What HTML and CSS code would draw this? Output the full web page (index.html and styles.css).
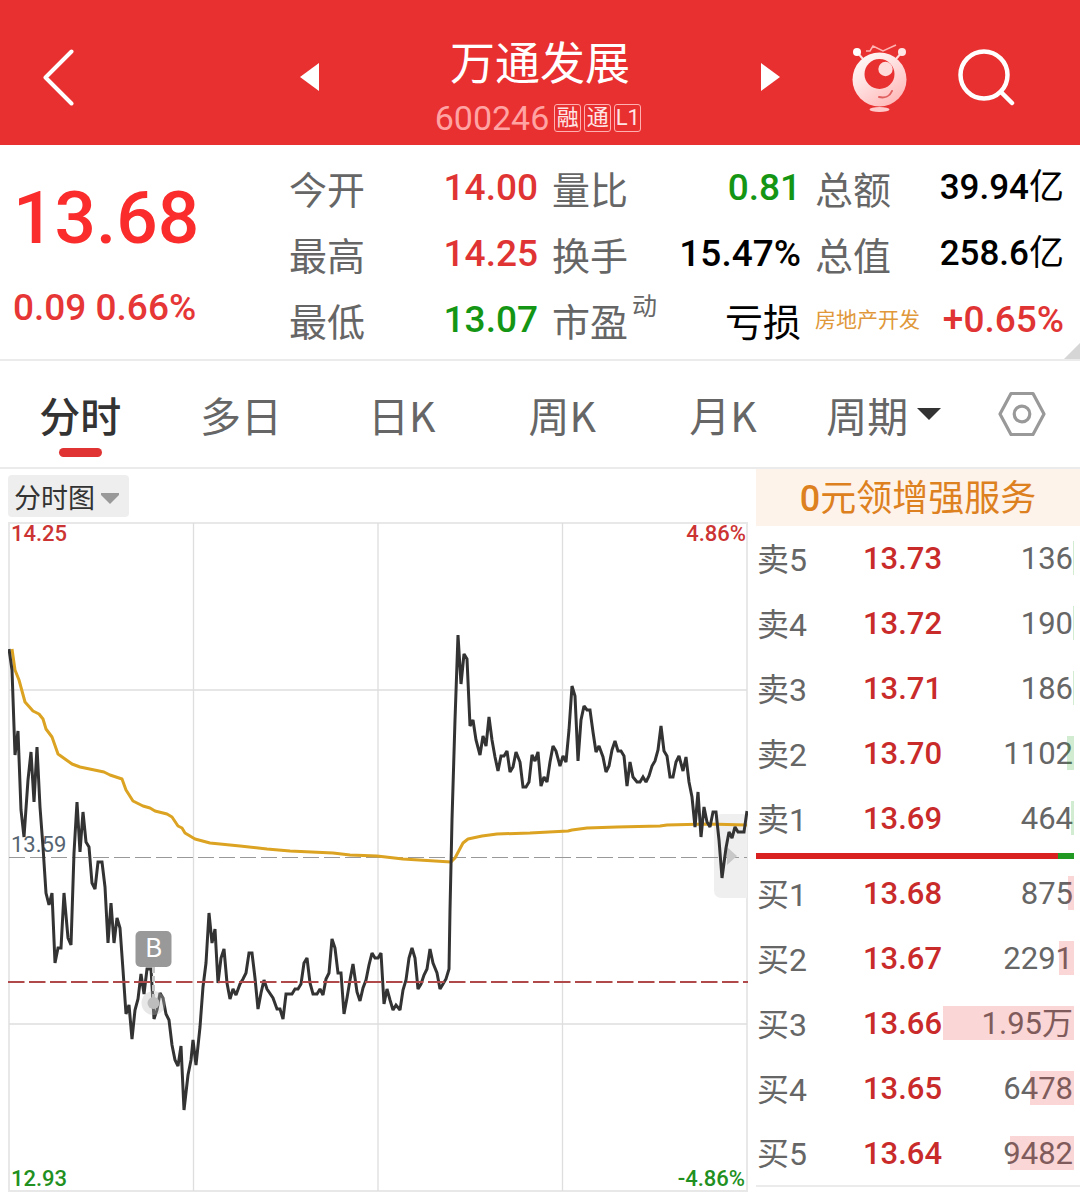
FILE: index.html
```html
<!DOCTYPE html>
<html lang="zh-CN">
<head>
<meta charset="utf-8">
<meta name="viewport" content="width=device-width">
<title>万通发展 600246</title>
<link rel="stylesheet" href="styles.css">
</head>
<body>
<header class="topbar">
  <button class="icon-btn back" aria-label="返回">
    <svg width="34" height="58" viewBox="0 0 34 58" fill="none" stroke="#fff" stroke-width="4" stroke-linecap="round" stroke-linejoin="round"><path d="M29.500 3.500 3.500 29.500 29.500 55.500"/></svg>
  </button>
  <div class="switcher">
    <button class="icon-btn" aria-label="上一只">
      <svg width="20" height="30" viewBox="0 0 20 30"><path d="M0 15 19 1v28z" fill="#fff"/></svg>
    </button>
    <div class="stock">
      <h1 class="stock-name">万通发展</h1>
      <p class="stock-code"><span class="code">600246</span><span class="badge">融</span><span class="badge">通</span><span class="badge">L1</span></p>
    </div>
    <button class="icon-btn" aria-label="下一只">
      <svg width="20" height="30" viewBox="0 0 20 30"><path d="M20 15 1 1v28z" fill="#fff"/></svg>
    </button>
  </div>
  <div class="tools">
    <button class="icon-btn" aria-label="智能助手">
      <svg width="56" height="70" viewBox="0 0 56 70">
        <defs><linearGradient id="body" x1="0" y1="0" x2=".7" y2="1"><stop offset="0" stop-color="#fff"/><stop offset=".45" stop-color="#ffe3e3"/><stop offset="1" stop-color="#ffb9b9"/></linearGradient></defs>
        <path d="M5 10l6 7M50 10l-6 7" stroke="#ffdcdc" stroke-width="2"/>
        <circle cx="5" cy="10" r="4" fill="#fff"/><circle cx="50" cy="10" r="4" fill="#ffe6e6"/>
        <path d="M14 9h4l3-5 10 5 13-6" fill="none" stroke="#ffb3b3" stroke-width="1.500"/>
        <circle cx="27.500" cy="37.500" r="27" fill="url(#body)"/>
        <circle cx="27.500" cy="32" r="15" fill="#e83030"/>
        <circle cx="33.500" cy="27" r="7.200" fill="#ffdada"/>
        <path d="M27 55c6 1.500 11-1 13-6" fill="none" stroke="#e06060" stroke-width="2" stroke-linecap="round"/>
        <ellipse cx="27.500" cy="67.500" rx="10" ry="2.500" fill="#ffc9c9"/>
      </svg>
    </button>
    <button class="icon-btn" aria-label="搜索">
      <svg width="58" height="58" viewBox="0 0 58 58" fill="none" stroke="#fff" stroke-width="4.500" stroke-linecap="round"><circle cx="26" cy="27" r="23.500"/><path d="M43.500 44.500 54 55"/></svg>
    </button>
  </div>
</header>

<section class="quote" aria-label="行情">
  <div class="last">
    <strong class="last-price">13.68</strong>
    <span class="last-change">0.09 0.66%</span>
  </div>
  <dl class="stats">
    <div class="stat"><dt>今开</dt><dd class="up">14.00</dd></div>
    <div class="stat"><dt>最高</dt><dd class="up">14.25</dd></div>
    <div class="stat"><dt>最低</dt><dd class="down">13.07</dd></div>
  </dl>
  <dl class="stats">
    <div class="stat"><dt>量比</dt><dd class="down">0.81</dd></div>
    <div class="stat"><dt>换手</dt><dd>15.47%</dd></div>
    <div class="stat"><dt>市盈<sup class="mark">动</sup></dt><dd class="word">亏损</dd></div>
  </dl>
  <dl class="stats">
    <div class="stat"><dt>总额</dt><dd class="amount">39.94<span class="unit">亿</span></dd></div>
    <div class="stat"><dt>总值</dt><dd class="amount">258.6<span class="unit">亿</span></dd></div>
    <div class="stat"><dt class="sector">房地产开发</dt><dd class="up">+0.65%</dd></div>
  </dl>
  <svg class="corner" width="16" height="16" viewBox="0 0 16 16" aria-hidden="true"><path d="M16 0v16H0z" fill="#d6d6d6"/></svg>
</section>

<nav class="tabs" aria-label="周期">
  <button class="tab active">分时</button>
  <button class="tab">多日</button>
  <button class="tab">日K</button>
  <button class="tab">周K</button>
  <button class="tab">月K</button>
  <button class="tab">周期<svg width="24" height="12" viewBox="0 0 24 12"><path d="M0 0h24L12 12z" fill="#333"/></svg></button>
  <button class="tab" aria-label="设置">
    <svg width="48" height="46" viewBox="0 0 48 46" fill="none" stroke="#999" stroke-width="3.200" stroke-linejoin="round"><path d="M13 2.500h22L46 23 35 43.500H13L2 23z"/><circle cx="24" cy="23" r="7.800"/></svg>
  </button>
</nav>

<main class="board">
  <section class="chart" aria-label="分时图">
    <div class="picker">
      <select class="picker-select" aria-label="图表类型"><option>分时图</option></select>
      <svg class="picker-arrow" width="18" height="11" viewBox="0 0 18 11"><path d="M0 0h18v2L9 11 0 2z" fill="#999"/></svg>
    </div>
    <svg class="plot" viewBox="8 522 740 672">
      <g fill="none" stroke="#e8e8e8" stroke-width="2">
        <path d="M9 523H747V1191H9z"/>
        <path d="M9 690H747M9 1024H747M193.500 523V1191M378 523V1191M562.500 523V1191" stroke="#dedede" stroke-width="1.300"/>
      </g>
      <path d="M747 814h-25q-8 0-8 8v68q0 8 8 8h25z" fill="#efefef"/>
      <path d="M9 857.500H747" stroke="#999" stroke-width="1" stroke-dasharray="16 5"/>
      <path d="M727 847v18l10-9z" fill="#c8c8c8"/>
      <text x="11" y="852" class="label base" fill="#566471">13.59</text>
      <polyline fill="none" stroke="#dba321" stroke-width="3" stroke-linejoin="round" points="12,649 15,670 19,680 25,702 33,711 39,714 43,719 46,729 52,737 58,754 65,759 72,764 80,767 104,772 110,775 122,779 126,790 133,801 143,806 150,808 155,811 167,814 172,817 178,826 182,828 185,833 195,839 210,843 240,846 267,849 290,851 333,853 350,855 377,856 403,859 451,862 455,858 463,843 468,839 482,836 497,834 530,833 568,831 572,830 587,828 617,827 660,826 667,825 707,824 747,825"/>
      <polyline fill="none" stroke="#333" stroke-width="3" stroke-linejoin="miter" stroke-miterlimit="2" points="9,649 12,670 15,755 18,731 21,810 24,837 28,780 31,752 34,802 37,747 40,807 43,847 46,893 49,905 52,893 55,963 58,948 61,948 64,893 68,938 71,945 74,853 77,802 80,852 83,812 86,842 89,847 92,883 95,889 98,862 102,862 105,887 108,943 111,903 114,943 117,918 120,928 123,970 126,1014 129,1005 132,1039 135,1010 138,999 141,974 144,994 147,969 151,969 154,1019 157,1010 160,993 163,998 166,1014 169,1020 172,1045 175,1060 178,1066 181,1046 184,1110 188,1075 191,1060 193,1040 196,1065 200,1027 203,987 206,963 209,913 212,943 215,929 218,983 221,958 224,949 227,983 230,999 233,989 236,995 240,984 243,979 246,973 249,953 252,953 255,978 258,1009 261,993 264,980 267,989 273,998 277,1009 280,1009 283,1019 286,994 292,994 295,989 298,989 301,984 304,963 307,958 310,983 313,994 317,994 320,989 323,995 326,979 329,973 332,939 335,948 338,973 341,973 344,1014 347,998 350,980 353,964 357,992 360,1001 363,988 366,980 369,965 372,953 375,958 378,958 381,953 384,1004 387,989 390,1000 393,1010 396,1005 400,1010 403,990 406,980 409,958 412,948 415,958 418,989 421,984 424,975 427,969 430,949 433,963 437,973 440,989 443,984 446,979 449,969 450,910 452,820 455,720 458,635 461,684 464,654 467,659 470,726 473,720 476,740 480,755 483,736 486,746 489,717 492,740 495,757 498,771 501,756 504,756 507,751 510,772 513,767 516,752 520,762 523,787 526,787 529,782 532,755 535,761 538,752 541,786 544,777 547,782 550,762 553,746 556,751 560,766 563,756 566,762 569,730 572,686 575,696 578,761 581,720 584,706 587,710 590,710 593,732 596,752 599,746 603,757 606,772 609,766 612,750 615,741 618,751 621,751 624,756 627,786 630,762 633,777 637,782 640,782 643,777 646,782 649,776 652,766 655,761 658,750 661,726 664,751 667,756 670,777 673,777 676,762 679,756 683,771 686,757 689,782 692,797 695,827 698,792 701,837 704,807 707,822 710,827 713,812 716,812 719,840 722,878 726,848 729,832 732,838 735,827 738,832 744,832 747,811"/>
      <path d="M8 982H748" stroke="#b04a4a" stroke-width="2" stroke-dasharray="16.500 4.500"/>
      <path d="M153.500 967V1003" stroke="#c4c4c4" stroke-width="3" stroke-dasharray="6 3"/>
      <circle cx="153.500" cy="1003" r="12" fill="#bbb" fill-opacity=".35"/>
      <circle cx="153.500" cy="1003" r="6" fill="#bdbdbd"/>
      <rect x="135.500" y="931" width="36" height="36" rx="5" fill="#999"/>
      <text x="153.500" y="957" class="flag" fill="#fff" text-anchor="middle">B</text>
      <text x="11" y="541" class="label" fill="#cc3333">14.25</text>
      <text x="746" y="541" class="label" fill="#cc3333" text-anchor="end">4.86%</text>
      <text x="11" y="1186" class="label" fill="#219021">12.93</text>
      <text x="745" y="1186" class="label" fill="#219021" text-anchor="end">-4.86%</text>
    </svg>
  </section>

  <section class="book" aria-label="五档盘口">
    <a class="promo" href="#"><b class="promo-zero">0</b>元领增强服务</a>
    <table class="levels ask">
      <tr><th scope="row">卖5</th><td class="price">13.73</td><td class="qty">136<i class="depth" style="width:1px"></i></td></tr>
      <tr><th scope="row">卖4</th><td class="price">13.72</td><td class="qty">190<i class="depth" style="width:1px"></i></td></tr>
      <tr><th scope="row">卖3</th><td class="price">13.71</td><td class="qty">186<i class="depth" style="width:1px"></i></td></tr>
      <tr><th scope="row">卖2</th><td class="price">13.70</td><td class="qty">1102<i class="depth" style="width:7px"></i></td></tr>
      <tr><th scope="row">卖1</th><td class="price">13.69</td><td class="qty">464<i class="depth" style="width:3px"></i></td></tr>
    </table>
    <div class="ratio"><span class="ratio-buy" style="width:95%"></span></div>
    <table class="levels bid">
      <tr><th scope="row">买1</th><td class="price">13.68</td><td class="qty">875<i class="depth" style="width:6px"></i></td></tr>
      <tr><th scope="row">买2</th><td class="price">13.67</td><td class="qty">2291<i class="depth" style="width:15px"></i></td></tr>
      <tr><th scope="row">买3</th><td class="price">13.66</td><td class="qty">1.95万<i class="depth" style="width:131px"></i></td></tr>
      <tr><th scope="row">买4</th><td class="price">13.65</td><td class="qty">6478<i class="depth" style="width:44px"></i></td></tr>
      <tr><th scope="row">买5</th><td class="price">13.64</td><td class="qty">9482<i class="depth" style="width:64px"></i></td></tr>
    </table>
  </section>
</main>
</body>
</html>
```

FILE: styles.css
```css
* { box-sizing: border-box; }

body {
  margin: 0;
  background: #fff;
  color: #000;
  font-family: Roboto, "Noto Sans CJK SC", sans-serif;
}

h1, p, dl, dd { margin: 0; }

button {
  padding: 0;
  border: 0;
  background: none;
  font: inherit;
  color: inherit;
}

svg { display: block; }

/* Title bar */
.topbar {
  display: grid;
  grid-template-columns: 1fr 480px 1fr;
  align-items: center;
  height: 145px;
  padding-top: 8px;
  background: #e83030;
  color: #fff;
}

.back { justify-self: start; margin-left: 42px; }

.switcher {
  display: flex;
  align-items: center;
  justify-content: space-between;
}

.stock {
  padding-top: 22px;
  text-align: center;
}

.stock-name {
  font-size: 45px;
  font-weight: 400;
  line-height: 60px;
}

.stock-code {
  display: flex;
  align-items: center;
  justify-content: center;
  gap: 3px;
  height: 46px;
  margin-right: 4px;
}

.code {
  margin-right: 2px;
  font-size: 34px;
  color: #ffa3a3;
}

.badge {
  width: 27px;
  height: 28px;
  border: 1px solid #ffb0b0;
  border-radius: 3px;
  font-size: 22px;
  line-height: 26px;
  color: #ffe6e6;
}

.tools {
  display: flex;
  align-items: center;
  justify-content: flex-end;
  gap: 50px;
  padding-right: 64px;
}

/* Quote summary */
.quote {
  position: relative;
  display: grid;
  grid-template-columns: 275px repeat(3, 1fr);
  column-gap: 14px;
  height: 216px;
  padding: 13px 16px 0 0;
  border-bottom: 2px solid #ebebeb;
}

.last {
  display: flex;
  flex-direction: column;
  padding: 16px 0 0 13px;
  color: #e63636;
}

.last-price {
  font-size: 73px;
  font-weight: 500;
  line-height: 88px;
  color: #fa2c2c;
}

.last-change {
  font-size: 37px;
  font-weight: 500;
  line-height: 92px;
}

.stat {
  display: flex;
  justify-content: space-between;
  height: 66px;
  font-size: 38px;
  line-height: 66px;
  white-space: nowrap;
}

.stat dt { color: #666; }

.stat dd {
  font-size: 37px;
  font-weight: 500;
  line-height: 60px;
}

.stat .amount { font-size: 35px; }

.unit { font-weight: 400; }

.stat .word {
  font-size: 38px;
  font-weight: 400;
  line-height: 66px;
}

.stat .sector {
  font-size: 21px;
  line-height: 60px;
  color: #e0983a;
}

.mark {
  font-size: 25px;
  line-height: 1;
  vertical-align: 21px;
  margin-left: 4px;
}

.up { color: #e03434; }
.down { color: #149614; }

.corner {
  position: absolute;
  right: 0;
  bottom: 0;
}

/* Period tabs */
.tabs {
  display: grid;
  grid-template-columns: repeat(6, 1fr) 116px;
  height: 108px;
  border-bottom: 2px solid #ebebeb;
}

.tab {
  position: relative;
  display: flex;
  align-items: center;
  justify-content: center;
  gap: 9px;
  font-family: "Noto Sans CJK SC", sans-serif;
  font-size: 41px;
  color: #666;
}

.active {
  font-weight: 500;
  color: #333;
}

.active::after {
  content: "";
  position: absolute;
  bottom: 10px;
  width: 43px;
  height: 9px;
  border-radius: 5px;
  background: #e03434;
}

/* Chart and order book */
.board {
  display: grid;
  grid-template-columns: 7fr 3fr;
}

.chart { padding: 6px 8px 0; }

.picker {
  position: relative;
  width: 121px;
  height: 42px;
  margin-bottom: 5px;
}

.picker-select {
  appearance: none;
  width: 100%;
  height: 100%;
  padding: 0 6px;
  border: 0;
  border-radius: 4px;
  background: #eee;
  font: 27px "Noto Sans CJK SC", sans-serif;
  color: #333;
}

.picker-arrow {
  position: absolute;
  right: 10px;
  top: 18px;
}

.plot { width: 100%; height: auto; }
.label { font: 500 22px Roboto, sans-serif; }
.base { font-weight: 400; }
.flag { font: 26px "Noto Sans CJK SC", sans-serif; }

.promo {
  display: block;
  height: 57px;
  background: #fef3ea;
  font-size: 36px;
  line-height: 60px;
  text-align: center;
  text-decoration: none;
  color: #dd8020;
}

.promo-zero { font-weight: 500; }

.levels {
  width: 100%;
  table-layout: fixed;
  border-collapse: collapse;
}

.levels tr { height: 65px; }

.levels th,
.levels td {
  padding: 0;
  font-size: 31px;
  line-height: 1;
  white-space: nowrap;
}

.levels th {
  width: 33%;
  padding: 2px 0 0 1px;
  font-size: 32px;
  font-weight: 400;
  text-align: left;
  color: #666;
}

.levels .price {
  width: 26%;
  font-weight: 500;
  color: #c92a2a;
}

.levels .qty {
  position: relative;
  padding-right: 7px;
  text-align: right;
  color: #666;
}

.depth {
  position: absolute;
  top: 15px;
  right: 6px;
  height: 34px;
}

.ask .depth { background: rgb(30 160 30 / 20%); }
.bid .depth { background: rgb(230 50 50 / 20%); }

.ratio {
  height: 6px;
  margin: 2px 6px 2px 0;
  background: #229922;
}

.ratio-buy {
  display: block;
  height: 100%;
  background: #d92121;
}

.bid { border-bottom: 2px solid #ebebeb; }
```
